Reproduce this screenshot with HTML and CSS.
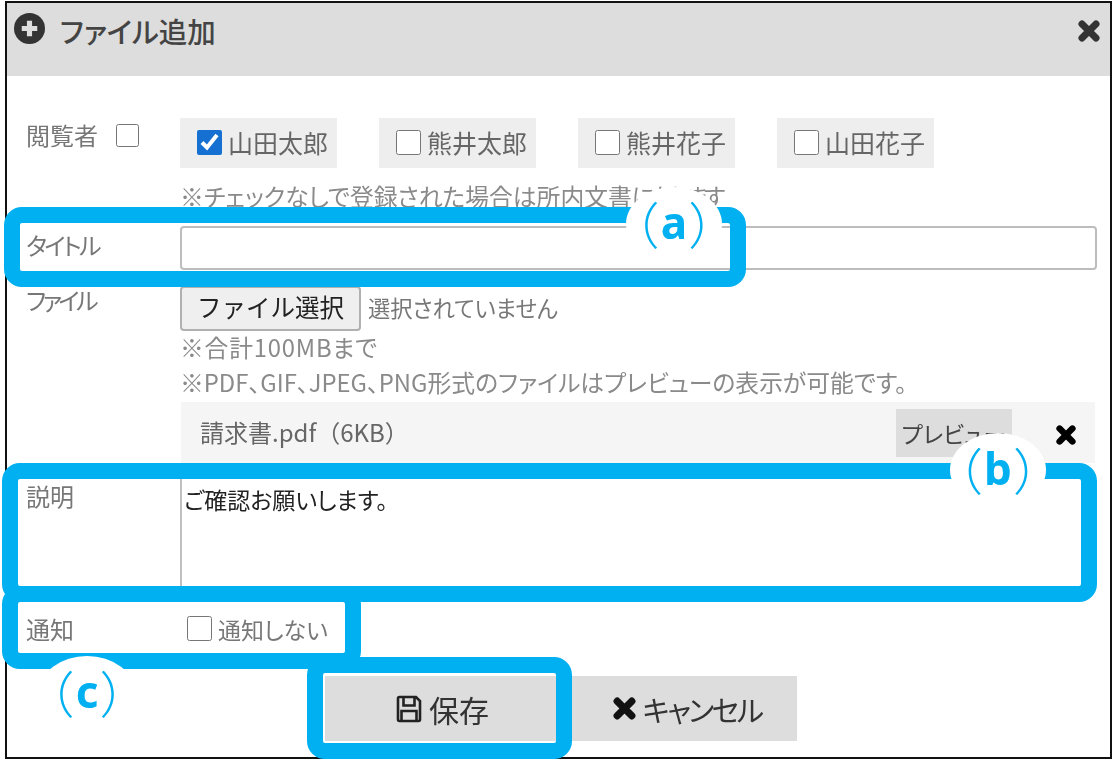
FILE: index.html
```html
<!DOCTYPE html>
<html lang="ja">
<head>
<meta charset="utf-8">
<title>ファイル追加</title>
<link rel="stylesheet" href="styles.css">
</head>
<body>
<div class="frame">
  <header class="head">
    <svg class="plus" viewBox="0 0 30 30"><circle cx="15" cy="15" r="15" fill="#333"/><path d="M15 7.500v15M7.500 15h15" stroke="#ddd" stroke-width="5"/></svg>
    <h1 class="title">ファイル追加</h1>
    <svg class="close" viewBox="0 0 24 24"><path d="M5 5L19 19M19 5L5 19" stroke="#333" stroke-width="7" stroke-linecap="round"/></svg>
  </header>
  <main class="body">
    <div class="row">
      <div class="label label-viewer"><span>閲覧者</span><input type="checkbox" class="cb-all"></div>
      <div class="field">
        <div class="chips">
          <label class="chip"><input type="checkbox" checked><span>山田太郎</span></label>
          <label class="chip"><input type="checkbox"><span>熊井太郎</span></label>
          <label class="chip"><input type="checkbox"><span>熊井花子</span></label>
          <label class="chip"><input type="checkbox"><span>山田花子</span></label>
        </div>
        <p class="note note-first">※チェックなしで登録された場合は所内文書<span class="note-tail">になります</span></p>
      </div>
    </div>
    <div class="row row-title">
      <div class="label label-kana label-title">タイトル</div>
      <div class="field"><input class="text-input" type="text"></div>
    </div>
    <div class="row row-file">
      <div class="label label-kana label-file">ファイル</div>
      <div class="field">
        <div class="picker"><button class="pick-btn" type="button">ファイル選択</button><span class="pick-none">選択されていません</span></div>
        <p class="note note-a">※合計100MBまで</p>
        <p class="note note-b">※PDF、GIF、JPEG、PNG形式のファイルはプレビューの表示が可能です。</p>
        <div class="file-item">
          <span class="file-name">請求書.pdf（6KB）</span>
          <button class="preview" type="button">プレビュー</button>
          <svg class="remove" viewBox="0 0 24 24"><path d="M5 5L19 19M19 5L5 19" stroke="#000" stroke-width="7" stroke-linecap="round"/></svg>
        </div>
      </div>
    </div>
    <div class="row row-desc">
      <div class="label label-desc">説明</div>
      <div class="field"><textarea class="desc">ご確認お願いします。</textarea></div>
    </div>
    <div class="row row-notify">
      <div class="label">通知</div>
      <label class="notify"><input type="checkbox"><span>通知しない</span></label>
    </div>
    <div class="actions">
      <button class="act act-save" type="button">
        <svg class="save-icon" viewBox="0 0 26 28"><path d="M2 3.500a1.500 1.500 0 0 1 1.500-1.500H20L24 6V24.500A1.500 1.500 0 0 1 22.500 26H3.500A1.500 1.500 0 0 1 2 24.500Z M7.500 2V10.500H18.500V2 M5.500 26V16H20.500V26" fill="none" stroke="#222" stroke-width="2.600"/></svg>
        <span>保存</span>
      </button>
      <button class="act act-cancel" type="button">
        <svg class="cancel-icon" viewBox="0 0 24 24"><path d="M5 5L19 19M19 5L5 19" stroke="#111" stroke-width="7" stroke-linecap="round"/></svg>
        <span class="cancel-text">キャンセル</span>
      </button>
    </div>
  </main>
</div>
<div class="hl hl-a"></div>
<div class="hl hl-b"></div>
<div class="hl hl-c"></div>
<div class="hl hl-save"></div>
<div class="badge badge-a"><i>（</i><b>a</b><i>）</i></div>
<div class="badge badge-b"><i>（</i><b>b</b><i>）</i></div>
<div class="badge badge-c"><i>（</i><b>c</b><i>）</i></div>
</body>
</html>
```
FILE: styles.css
```css
* { box-sizing: border-box; }
html, body { margin: 0; padding: 0; height: 100%; background: #fff; overflow: hidden; }
body {
  position: relative;
  font-family: "Noto Sans CJK JP", "Noto Sans", sans-serif;
  font-feature-settings: "palt";
  color: #777;
}
.frame {
  margin: 1px 0 0 5px;
  width: 1107px;
  height: 758px;
  border: 2px solid #111;
  display: flex;
  flex-direction: column;
  overflow: hidden;
  filter: blur(0.45px);
}
.head {
  height: 73px;
  flex: none;
  background: #ddd;
  display: flex;
  align-items: flex-start;
  padding: 10px 9px 0 7px;
}
.plus { width: 31px; height: 31px; flex: none; }
.title {
  margin: 0 0 0 15px;
  font-size: 28.500px;
  font-weight: 500;
  line-height: 36px;
  color: #444;
  flex: 1;
}
.close { width: 24px; height: 24px; margin-top: 6px; flex: none; }
.body { padding: 42px 13px 0 19px; flex: 1; }
.row { display: grid; grid-template-columns: 154px 1fr; }
.label { font-size: 24px; line-height: 30px; color: #777; }
.label-kana { letter-spacing: -2.500px; }
.label-viewer { display: flex; align-items: center; height: 34px; }
.cb-all { width: 23px; height: 23px; margin: 0 0 0 18px; }
.chips { display: flex; gap: 42px; }
.chip {
  width: 157px;
  height: 50px;
  background: #eee;
  display: flex;
  align-items: center;
  padding: 0 0 2px 17px;
  font-size: 25px;
  color: #666;
}
.chip input, .notify input {
  width: 25px;
  height: 25px;
  margin: 0 6px 0 0;
  accent-color: #1670d2;
  flex: none;
}
.note { margin: 0; font-size: 23.800px; line-height: 30px; color: #8a8a8a; white-space: nowrap; }
.note-first { margin-top: 13px; }
.note-tail { letter-spacing: -4px; }
.row-title { margin-top: 15px; }
.label-title { padding-top: 4px; }
.text-input {
  display: block;
  width: 100%;
  height: 44px;
  border: 2px solid #bdbdbd;
  border-radius: 4px;
  background: #fff;
}
.row-file { margin-top: 16px; }
.label-file { line-height: 28px; letter-spacing: -3.500px; }
.picker { display: flex; align-items: center; }
.pick-btn {
  width: 181px;
  height: 45px;
  background: #efefef;
  border: 2px solid #b0b0b0;
  border-radius: 4px;
  font: inherit;
  font-feature-settings: normal;
  font-size: 24.500px;
  color: #222;
  padding: 0 0 4px;
}
.pick-none { margin: -4px 0 0 7px; font-size: 22.300px; color: #777; }
.note-a { margin-top: 1px; letter-spacing: 0.800px; }
.note-b { margin-top: 5px; }
.file-item {
  margin-top: 5px;
  margin-left: 1px;
  height: 61px;
  width: 914px;
  background: #f5f5f5;
  display: flex;
  align-items: flex-start;
  padding: 7px 18px 0 19px;
}
.file-name { flex: 1; font-size: 24px; line-height: 46px; color: #666; font-feature-settings: normal; }
.preview {
  width: 116px;
  height: 48px;
  border: 0;
  background: #ddd;
  font: inherit;
  font-size: 23px;
  color: #444;
  padding: 0;
}
.remove { width: 22px; height: 22px; margin: 15px 0 0 43px; flex: none; }
.row-desc { margin-top: 2px; }
.label-desc { padding-top: 16px; }
.desc {
  display: block;
  width: 100%;
  height: 135px;
  border: 0;
  border-left: 2px solid #c0c0c0;
  padding: 19px 0 0 2px;
  margin: 0;
  font: inherit;
  font-size: 23px;
  line-height: 30px;
  color: #222;
  resize: none;
  overflow: hidden;
  outline: 0;
}
.row-notify { height: 76px; align-items: center; padding-bottom: 19px; }
.notify { display: flex; align-items: center; padding-left: 7px; font-size: 23px; color: #777; }
.actions { display: flex; padding-left: 299px; }
.act {
  height: 65px;
  border: 0;
  background: #ddd;
  font: inherit;
  color: #333;
  display: flex;
  align-items: center;
  justify-content: center;
  padding: 0;
}
.act-save { width: 235px; font-size: 30px; }
.act-cancel { width: 237px; font-size: 29px; padding-left: 16px; }
.cancel-text { letter-spacing: -2.500px; }
.save-icon { width: 26px; height: 28px; margin-right: 7px; }
.cancel-icon { width: 25px; height: 25px; margin-right: 6px; }

.hl {
  position: absolute;
  border: 16px solid #00b0f0;
  border-radius: 18px;
}
.hl-a { left: 4px; top: 207px; width: 742px; height: 80px; }
.hl-b { left: 2px; top: 463px; width: 1095px; height: 139px; }
.hl-c { left: 2px; top: 586px; width: 359px; height: 83px; }
.hl-save { left: 307px; top: 657px; width: 265px; height: 102px; }
.badge {
  position: absolute;
  width: 96px;
  height: 74px;
  border-radius: 50%;
  background: #fff;
  color: #00b0f0;
  display: flex;
  align-items: center;
  justify-content: center;
  font-family: "Noto Sans", "Noto Sans CJK JP", sans-serif;
  line-height: 1;
}
.badge i { font-family: "Noto Sans CJK JP", sans-serif; font-style: normal; font-weight: 300; font-size: 50px; margin-top: -4px; }
.badge b { font-weight: 700; font-size: 44px; margin: -4px 3px 0; }
.badge-a { left: 626px; top: 187px; }
.badge-b { left: 950px; top: 433px; }
.badge-c { left: 39px; top: 656px; }
```
